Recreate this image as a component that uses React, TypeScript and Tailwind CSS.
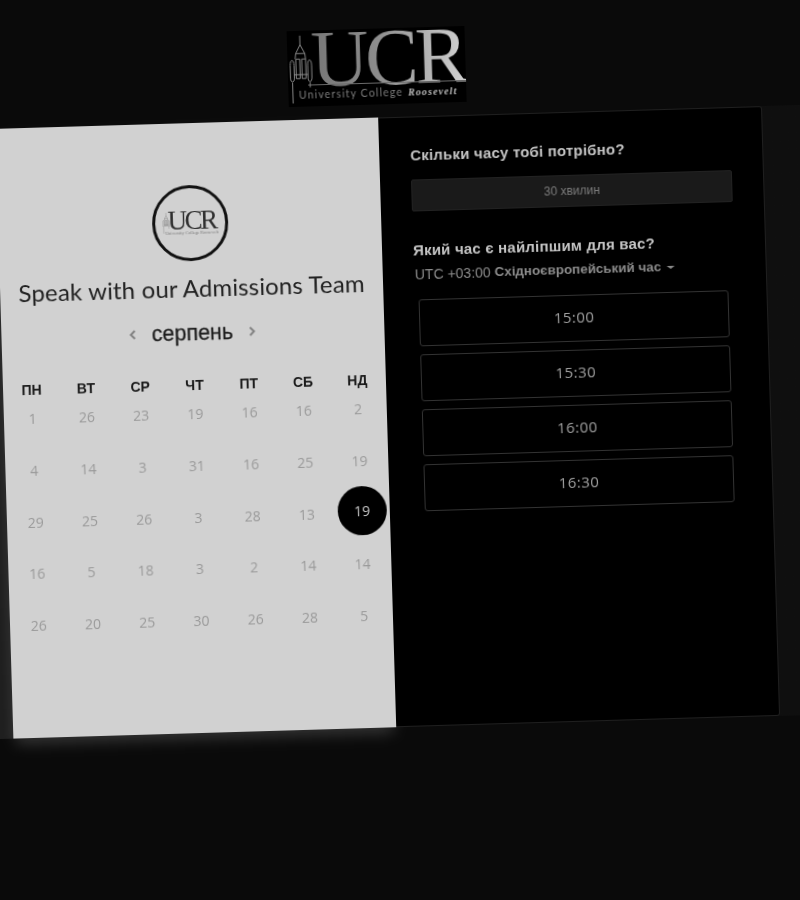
const weeks = [
  ["1", "26", "23", "19", "16", "16", "2"],
  ["4", "14", "3", "31", "16", "25", "19"],
  ["29", "25", "26", "3", "28", "13", "19"],
  ["16", "5", "18", "3", "2", "14", "14"],
  ["26", "20", "25", "30", "26", "28", "5"],
];
const dayNames = ["ПН", "ВТ", "СР", "ЧТ", "ПТ", "СБ", "НД"];
const slots = ["15:00", "15:30", "16:00", "16:30"];

function Tower({ className }: { className: string }) {
  return (
    <svg viewBox="0 0 80 210" className={className} fill="none" stroke="currentColor" strokeWidth="3">
      <path d="M40 0V28L26 55L24 72M40 28L54 55L56 72M26 55H54" />
      <path d="M8 92C8 70 20 70 20 92V130C20 146 8 146 8 130Z" />
      <path d="M26 72H38V132H26Z" />
      <path d="M44 72H56V132H44Z" />
      <path d="M62 92C62 70 74 70 74 92V130C74 146 62 146 62 130Z" />
      <path d="M20 120H62M14 144V208M68 144V160" />
    </svg>
  );
}

export default function App() {
  return (
    <div className="w-[800px] h-[900px] overflow-hidden bg-[#0a0a0a] font-['Liberation_Sans',sans-serif]">
      <div className="w-[800px] h-[900px] flex flex-col items-center rotate-[-1.7deg] origin-center grayscale blur-[0.4px]">
        <div className="mt-[28px] ml-[-25px] w-[178px] h-[76px] bg-black flex flex-col relative shrink-0">
          <Tower className="absolute left-[0px] top-[4px] w-[26px] h-[70px] text-[#8a8a8a]" />
          <div className="pl-[24px] h-[58px] -mb-[4px] leading-[58px] font-['Liberation_Serif',serif] text-[80px] tracking-[-3.5px] bg-gradient-to-r from-[#6f6f6f] via-[#8c8c8c] to-[#d2d2d2] bg-clip-text text-transparent whitespace-nowrap">
            UCR
          </div>
          <div className="ml-[20px] w-[158px] h-px bg-[#6a6a6a]" />
          <div className="mt-[2px] ml-[11px] flex items-baseline gap-[5px] whitespace-nowrap leading-[14px]">
            <span className="font-['Lato',sans-serif] text-[10.5px] tracking-[1.15px] text-[#7c7c7c]">University College</span>
            <span className="font-['Liberation_Serif',serif] italic font-bold text-[10px] tracking-[1.1px] text-[#bdbdbd]">Roosevelt</span>
          </div>
        </div>
        <div className="mt-[13px] w-[1000px] h-[610px] shrink-0 flex justify-center bg-gradient-to-r from-[#1f1f1f] from-50% to-[#0f0f0f] to-50%">
          <div className="ml-[-23px] w-[767px] h-[610px] flex shrink-0">
            <div className="w-[383px] bg-[#d1d1d1] flex flex-col items-center pt-[62px] shadow-[0_8px_14px_-3px_rgba(255,255,255,0.18)]">
              <div className="w-[76px] h-[76px] rounded-full border-[3px] border-[#111111] flex items-center justify-center relative">
                <div className="flex flex-col items-center ml-[4px]">
                  <div className="font-['Liberation_Serif',serif] text-[27px] tracking-[-2.5px] text-[#2e2e2e] leading-[20px]">UCR</div>
                  <div className="font-['Liberation_Serif',serif] text-[4.5px] text-[#7a7a7a] leading-[6px] whitespace-nowrap">University College Roosevelt</div>
                </div>
                <Tower className="absolute left-[7px] top-[24px] w-[8px] h-[21px] text-[#666666]" />
              </div>
              <h1 className="mt-[9px] font-['Lato',sans-serif] text-[24px] tracking-[0.15px] leading-[36px] text-[#222222] whitespace-nowrap">Speak with our Admissions Team</h1>
              <div className="mt-[12px] flex items-center gap-[15px] ml-[-1px]">
                <svg viewBox="0 0 10 14" className="w-[8px] h-[12px] text-[#808080]" fill="none" stroke="currentColor" strokeWidth="2.4"><path d="M8 2L3 7L8 12" /></svg>
                <span className="text-[21.5px] leading-[30px] text-[#1c1c1c] [-webkit-text-stroke:0.3px_#1c1c1c]">серпень</span>
                <svg viewBox="0 0 10 14" className="w-[8px] h-[12px] text-[#808080]" fill="none" stroke="currentColor" strokeWidth="2.4"><path d="M2 2L7 7L2 12" /></svg>
              </div>
              <div className="mt-[28px] w-[380px] grid grid-cols-7 text-center text-[14px] font-bold text-[#1a1a1a]">
                {dayNames.map((d) => (
                  <div key={d} className="h-[18px] leading-[18px]">{d}</div>
                ))}
              </div>
              <div className="-mt-[6px] w-[380px] grid grid-cols-7 auto-rows-[51.7px] text-center font-['Open_Sans',sans-serif] text-[14px] text-[#9a9a9a]">
                {weeks.flat().map((n, i) => (
                  <div key={i} className="flex items-center justify-center">
                    {i === 20 ? (
                      <span className="w-[49px] h-[49px] mb-[3px] ml-[2px] rounded-full bg-black text-[#c8c8c8] flex items-center justify-center">{n}</span>
                    ) : (
                      n
                    )}
                  </div>
                ))}
              </div>
            </div>
            <div className="w-[384px] bg-black border border-[#1f1f1f] border-l-0 rounded-r-[3px] pl-[31px] pr-[30px] pt-[28px]">
              <h2 className="text-[15px] tracking-[0.2px] leading-[20px] font-bold text-[#c4c4c4]">Скільки часу тобі потрібно?</h2>
              <div className="mt-[14px] w-[321px] h-[32px] rounded-[2px] bg-[#1a1a1a] border border-[#222222] flex items-center justify-center text-[12px] text-[#7c7c7c]">30 хвилин</div>
              <h2 className="mt-[29px] text-[15px] tracking-[0.2px] leading-[20px] font-bold text-[#c4c4c4]">Який час є найліпшим для вас?</h2>
              <div className="mt-[4px] ml-[1px] flex items-center text-[14px] leading-[20px] text-[#8c8c8c]">
                <span>UTC +03:00&nbsp;</span>
                <span className="font-bold text-[13.4px]">Східноєвропейський час</span>
                <span className="ml-[6px] w-0 h-0 border-x-[4px] border-x-transparent border-t-[3px] border-t-[#8c8c8c]" />
              </div>
              <div className="mt-[15px] ml-[4px] w-[310px] flex flex-col gap-[8px]">
                {slots.map((s) => (
                  <div key={s} className="h-[47px] pb-[2px] rounded-[3px] border border-[#333333] flex items-center justify-center font-['Open_Sans',sans-serif] text-[15px] tracking-[0.5px] text-[#a0a0a0]">{s}</div>
                ))}
              </div>
            </div>
          </div>
        </div>
      </div>
    </div>
  );
}
